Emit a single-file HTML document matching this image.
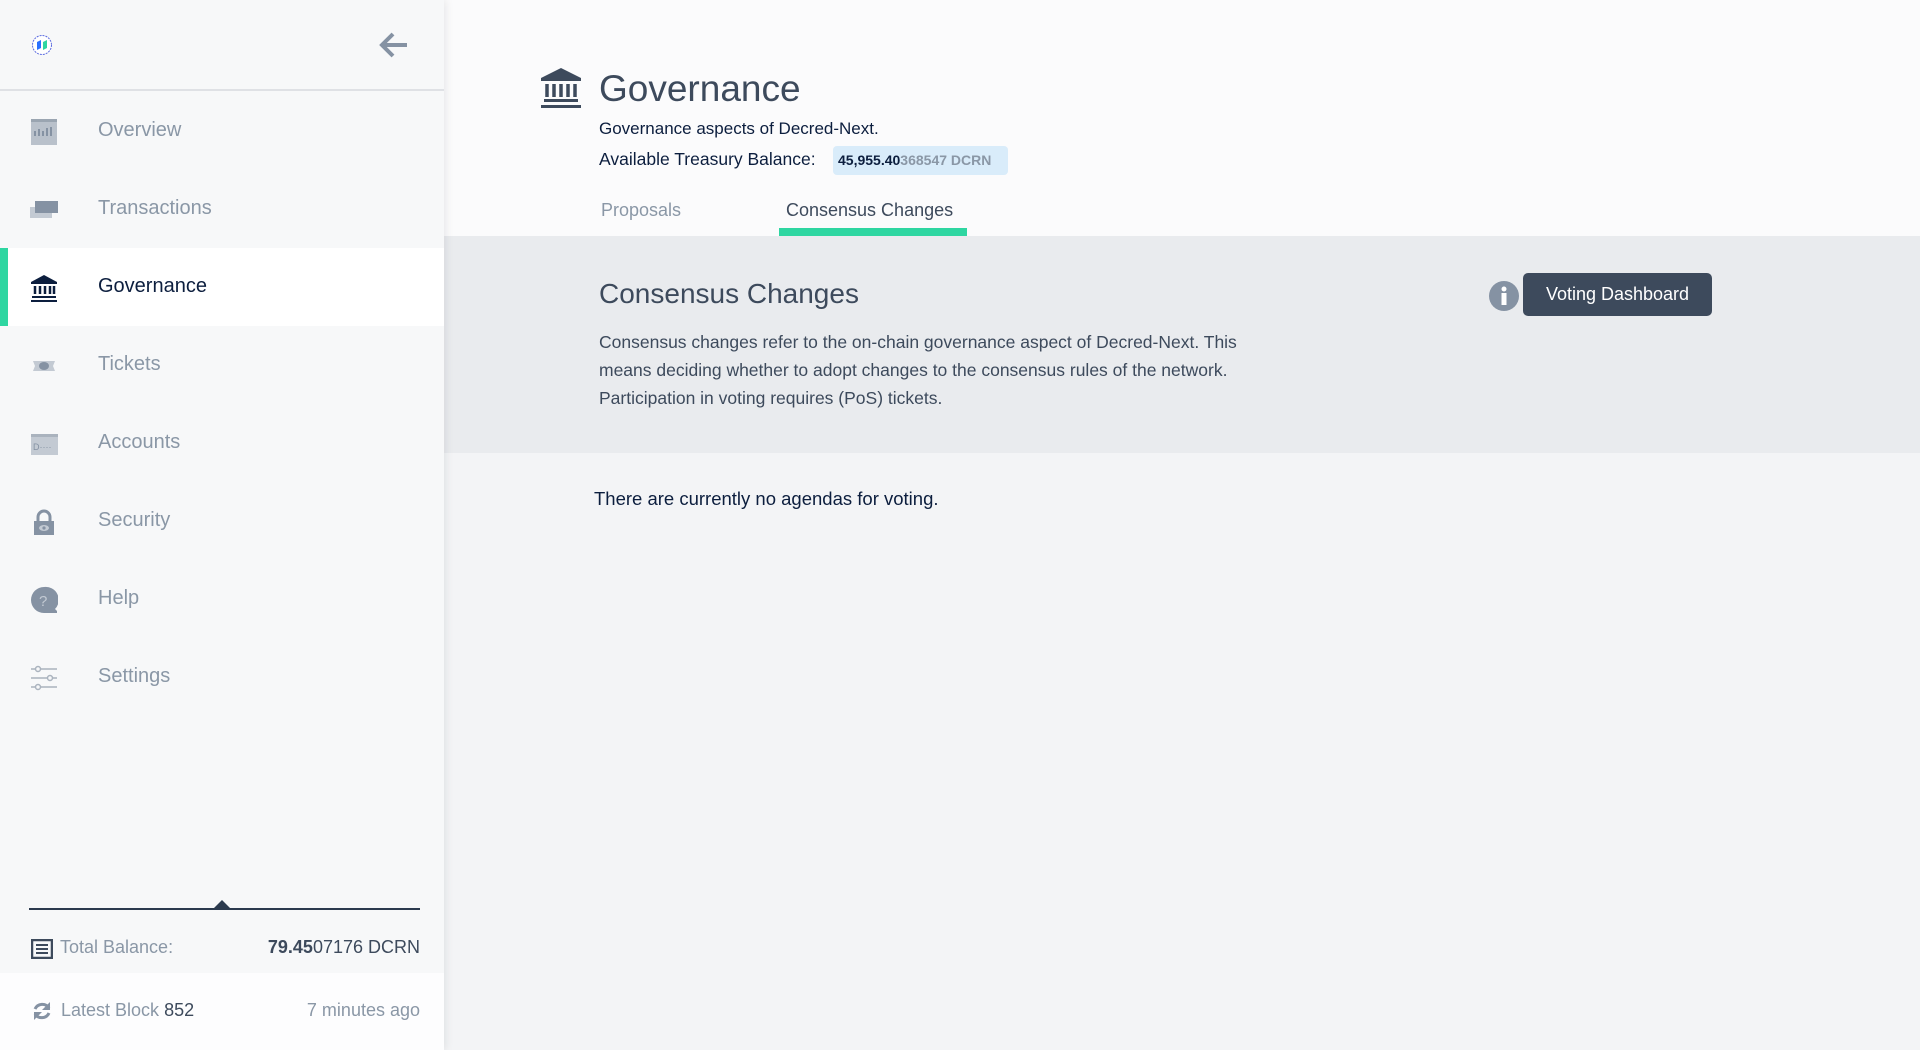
<!DOCTYPE html>
<html><head><meta charset="utf-8"><style>
*{margin:0;padding:0;box-sizing:border-box}
body{width:1920px;height:1050px;overflow:hidden;background:#f3f4f6;font-family:"Liberation Sans",sans-serif;position:relative}
.side{position:absolute;left:0;top:0;width:444px;height:1050px;background:#f7f8f9;box-shadow:2px 0 8px rgba(0,0,0,.08);z-index:2}
.hdr{height:91px;border-bottom:2px solid #dfe1e5;position:relative}
.nav{position:absolute;left:0;width:444px;height:78px;display:flex;align-items:center}
.nav .ic{position:absolute;left:30px;top:26px;width:28px;height:28px}
.nav span{position:absolute;left:98px;top:27px;font-size:20px;color:#8a97a6}
.nav.act{background:#fff}
.nav.act span{color:#0c1e3e}
.nav.act:before{content:"";position:absolute;left:0;top:0;width:8px;height:78px;background:#2ed6a1}
.main{position:absolute;left:444px;top:0;right:0;height:1050px}
.top{position:absolute;left:0;top:0;right:0;height:236px;background:#fbfbfc}
.grey{position:absolute;left:0;top:236px;right:0;height:217px;background:#e9ebee}
.t{position:absolute;white-space:nowrap}
</style></head><body>
<div class="side">
 <div class="hdr">
  <svg style="position:absolute;left:31px;top:34px" width="22" height="22" viewBox="0 0 22 22"><circle cx="11" cy="11" r="9.5" fill="#fff" stroke="#5b6be0" stroke-width="1" stroke-dasharray="2 1"/><path d="M6 16V8l4-2v8z" fill="#2970ff"/><path d="M16 6v8l-4 2V8z" fill="#2ed6a1"/></svg>
  <svg style="position:absolute;left:378px;top:30px" width="32" height="30" viewBox="0 0 32 30"><path d="M29 15H5M15 4L4 15l11 11" fill="none" stroke="#8592a3" stroke-width="4"/></svg>
 </div>
 <div class="nav" style="top:92px"><svg class="ic" viewBox="0 0 28 28"><rect x="1" y="1" width="26" height="26" fill="#b9c1cb"/><rect x="1" y="1" width="26" height="3" fill="#9aa5b1"/><path d="M5 18v-5M9 18v-7M13 18v-5M17 18v-8M21 18v-9" stroke="#8592a3" stroke-width="2"/></svg><span>Overview</span></div>
 <div class="nav" style="top:170px"><svg class="ic" viewBox="0 0 28 28"><rect x="0" y="11" width="22" height="11" fill="#c3cad3"/><rect x="5" y="5" width="23" height="12" fill="#8592a3"/></svg><span>Transactions</span></div>
 <div class="nav act" style="top:248px"><svg class="ic" viewBox="0 0 28 28"><path d="M14 1L1 8h26z" fill="#0c1e3e"/><rect x="1" y="8" width="26" height="2" fill="#0c1e3e"/><path d="M5 12v8M10 12v8M15 12v8M20 12v8M24 12v8" stroke="#0c1e3e" stroke-width="2.5"/><rect x="2" y="22" width="24" height="2" fill="#0c1e3e"/><rect x="1" y="26" width="26" height="2" fill="#0c1e3e"/></svg><span>Governance</span></div>
 <div class="nav" style="top:326px"><svg class="ic" viewBox="0 0 28 28"><path d="M3 9h22l-2 5 2 5H3l2-5z" fill="#c3cad3"/><ellipse cx="14" cy="14" rx="5" ry="4" fill="#8592a3"/></svg><span>Tickets</span></div>
 <div class="nav" style="top:404px"><svg class="ic" viewBox="0 0 28 28"><rect x="1" y="4" width="27" height="21" fill="#c3cad3"/><rect x="1" y="4" width="27" height="3" fill="#aab3be"/><text x="3" y="20" font-size="9" fill="#8592a3" font-family="Liberation Sans">D····</text></svg><span>Accounts</span></div>
 <div class="nav" style="top:482px"><svg class="ic" viewBox="0 0 28 28"><path d="M8 13V9a6 6 0 0112 0v4" fill="none" stroke="#8592a3" stroke-width="3"/><rect x="4" y="13" width="20" height="14" fill="#8592a3"/><ellipse cx="14" cy="20" rx="5" ry="3" fill="#c3cad3"/><circle cx="14" cy="20" r="1.6" fill="#8592a3"/></svg><span>Security</span></div>
 <div class="nav" style="top:560px"><svg class="ic" viewBox="0 0 28 28"><path d="M14 1a13 13 0 100 26h13v-2l-2-2A13 13 0 0014 1z" fill="#8592a3"/><text x="9" y="20" font-size="15" fill="#c3cad3" font-family="Liberation Sans">?</text></svg><span>Help</span></div>
 <div class="nav" style="top:638px"><svg class="ic" viewBox="0 0 28 28"><path d="M1 5h26M1 14h26M1 23h26" stroke="#aab3be" stroke-width="1.5"/><circle cx="8" cy="5" r="2.5" fill="#f7f8f9" stroke="#aab3be" stroke-width="1.5"/><circle cx="20" cy="14" r="2.5" fill="#f7f8f9" stroke="#aab3be" stroke-width="1.5"/><circle cx="8" cy="23" r="2.5" fill="#f7f8f9" stroke="#aab3be" stroke-width="1.5"/></svg><span>Settings</span></div>
 <div style="position:absolute;left:29px;top:908px;width:391px;height:2px;background:#2b3a4e"></div>
 <div style="position:absolute;left:213px;top:900px;width:0;height:0;border-left:9px solid transparent;border-right:9px solid transparent;border-bottom:9px solid #2b3a4e"></div>
 <svg style="position:absolute;left:31px;top:939px" width="22" height="20" viewBox="0 0 22 20"><rect x="1" y="1" width="20" height="18" fill="none" stroke="#3d4a5c" stroke-width="2.5"/><path d="M5 6h12M5 10h12M5 14h12" stroke="#3d4a5c" stroke-width="2"/></svg>
 <div class="t" style="left:60px;top:937px;font-size:18px;color:#8a97a6">Total Balance:</div>
 <div class="t" style="right:24px;top:937px;font-size:18px;color:#3d4a5c"><b>79.45</b>07176 DCRN</div>
 <div style="position:absolute;left:0;top:973px;width:444px;height:77px;background:#fdfdfe"></div>
 <svg style="position:absolute;left:31px;top:1000px" width="22" height="22" viewBox="0 0 22 22"><path d="M18 8A8 8 0 004 9M4 14a8 8 0 0014-1" fill="none" stroke="#8592a3" stroke-width="3"/><path d="M19 2v8h-8zM3 20v-8h8z" fill="#8592a3"/></svg>
 <div class="t" style="left:61px;top:1000px;font-size:18px;color:#8a97a6">Latest Block <span style="color:#3d4a5c">852</span></div>
 <div class="t" style="right:24px;top:1000px;font-size:18px;color:#8a97a6">7 minutes ago</div>
</div>
<div class="main">
 <div class="top"></div>
 <svg style="position:absolute;left:96px;top:68px" width="42" height="40" viewBox="0 0 42 40"><path d="M21 0L1 10h40z" fill="#3d4a5c"/><rect x="1" y="10" width="40" height="3" fill="#3d4a5c"/><path d="M7 16v13M14 16v13M21 16v13M28 16v13M35 16v13" stroke="#3d4a5c" stroke-width="3.5"/><rect x="4" y="31" width="34" height="3" fill="#3d4a5c"/><rect x="1" y="37" width="40" height="3" fill="#3d4a5c"/></svg>
 <div class="t" style="left:155px;top:68px;font-size:37px;color:#3d4a5c">Governance</div>
 <div class="t" style="left:155px;top:119px;font-size:17px;color:#0c1e3e">Governance aspects of Decred-Next.</div>
 <div class="t" style="left:155px;top:149px;font-size:17.5px;color:#0c1e3e">Available Treasury Balance:</div>
 <div class="t" style="left:389px;top:146px;width:175px;height:29px;background:#d9ecfa;border-radius:4px;font-size:14px;font-weight:bold;line-height:29px;padding-left:5px;color:#0c1e3e">45,955.40<span style="color:#8a97a6">368547 DCRN</span></div>
 <div class="t" style="left:157px;top:200px;font-size:18px;color:#8a97a6">Proposals</div>
 <div class="t" style="left:342px;top:200px;font-size:18px;color:#3d4a5c">Consensus Changes</div>
 <div style="position:absolute;left:335px;top:228px;width:188px;height:8px;background:#2ed6a1"></div>
 <div class="grey"></div>
 <div class="t" style="left:155px;top:278px;font-size:28px;color:#3d4a5c">Consensus Changes</div>
 <div class="t" style="left:155px;top:328px;font-size:17.5px;line-height:28px;color:#3d4a5c">Consensus changes refer to the on-chain governance aspect of Decred-Next. This<br>means deciding whether to adopt changes to the consensus rules of the network.<br>Participation in voting requires (PoS) tickets.</div>
 <svg style="position:absolute;left:1045px;top:281px" width="30" height="30" viewBox="0 0 30 30"><circle cx="15" cy="15" r="15" fill="#8592a3"/><circle cx="15" cy="8" r="2.5" fill="#fff"/><rect x="12.5" y="12" width="5" height="12" fill="#fff"/></svg>
 <div class="t" style="left:1079px;top:273px;width:189px;height:43px;background:#3d4a5c;border-radius:5px;color:#fff;font-size:18px;line-height:43px;text-align:center">Voting Dashboard</div>
 <div class="t" style="left:150px;top:488px;font-size:18.5px;color:#0c1e3e">There are currently no agendas for voting.</div>
</div>
</body></html>
